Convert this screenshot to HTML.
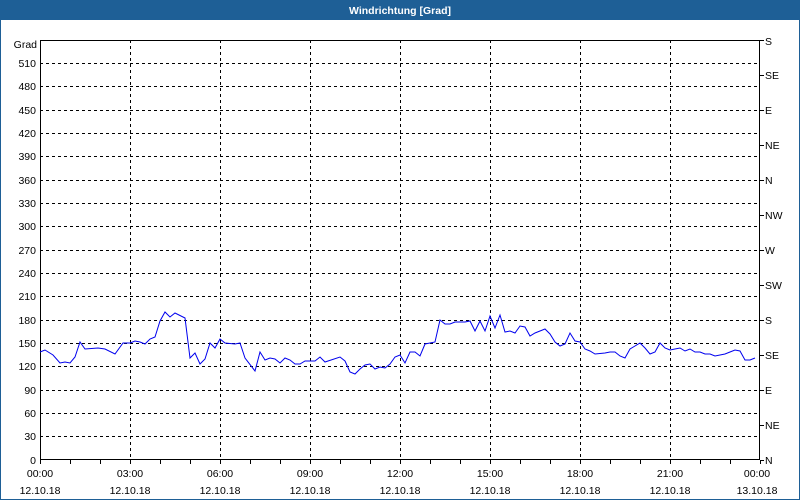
<!DOCTYPE html>
<html><head><meta charset="utf-8"><style>
html,body{margin:0;padding:0;background:#fff}
svg{display:block}
text{font-family:"Liberation Sans",sans-serif;font-size:10.5px;fill:#000}
</style></head><body>
<svg width="800" height="500" viewBox="0 0 800 500" xmlns="http://www.w3.org/2000/svg">
<rect x="0" y="0" width="800" height="500" fill="#fff"/>
<rect x="0.5" y="0.5" width="799" height="499" fill="none" stroke="#1e5f96"/>
<rect x="0" y="0" width="800" height="20" fill="#1e5f96"/>
<text x="400" y="14" text-anchor="middle" style="fill:#fff;font-weight:bold;font-size:10.5px">Windrichtung [Grad]</text>
<g stroke="#000" stroke-dasharray="3,3" stroke-width="1" shape-rendering="crispEdges">
<line x1="40" y1="63.5" x2="760" y2="63.5"/><line x1="40" y1="86.5" x2="760" y2="86.5"/><line x1="40" y1="110.5" x2="760" y2="110.5"/><line x1="40" y1="133.5" x2="760" y2="133.5"/><line x1="40" y1="156.5" x2="760" y2="156.5"/><line x1="40" y1="180.5" x2="760" y2="180.5"/><line x1="40" y1="203.5" x2="760" y2="203.5"/><line x1="40" y1="226.5" x2="760" y2="226.5"/><line x1="40" y1="250.5" x2="760" y2="250.5"/><line x1="40" y1="273.5" x2="760" y2="273.5"/><line x1="40" y1="296.5" x2="760" y2="296.5"/><line x1="40" y1="320.5" x2="760" y2="320.5"/><line x1="40" y1="343.5" x2="760" y2="343.5"/><line x1="40" y1="366.5" x2="760" y2="366.5"/><line x1="40" y1="390.5" x2="760" y2="390.5"/><line x1="40" y1="413.5" x2="760" y2="413.5"/><line x1="40" y1="436.5" x2="760" y2="436.5"/>
<line x1="130.5" y1="40" x2="130.5" y2="460"/><line x1="220.5" y1="40" x2="220.5" y2="460"/><line x1="310.5" y1="40" x2="310.5" y2="460"/><line x1="400.5" y1="40" x2="400.5" y2="460"/><line x1="490.5" y1="40" x2="490.5" y2="460"/><line x1="580.5" y1="40" x2="580.5" y2="460"/><line x1="670.5" y1="40" x2="670.5" y2="460"/>
</g>
<g stroke="#000" stroke-width="1" shape-rendering="crispEdges" fill="none">
<rect x="40.5" y="40.5" width="719" height="419"/>
<path d="M70.5 460v4M100.5 460v4M130.5 460v4M160.5 460v4M190.5 460v4M220.5 460v4M250.5 460v4M280.5 460v4M310.5 460v4M340.5 460v4M370.5 460v4M400.5 460v4M430.5 460v4M460.5 460v4M490.5 460v4M520.5 460v4M550.5 460v4M580.5 460v4M610.5 460v4M640.5 460v4M670.5 460v4M700.5 460v4M730.5 460v4M760.5 460v4M40.5 460v4"/>
<path d="M760 40.5h4M760 75.5h4M760 110.5h4M760 145.5h4M760 180.5h4M760 215.5h4M760 250.5h4M760 285.5h4M760 320.5h4M760 355.5h4M760 390.5h4M760 425.5h4M760 460.5h4"/>
</g>
<polyline fill="none" stroke="#0000ee" stroke-width="1" points="40,352 45,350 53,355 60,363 65,362 70,363 75,357 80,342 85,349 98,348 105,349 115,354 123,343 130,343 135,341 140,342 145,344 150,339 155,337 160,321 165,312 170,317 175,313 185,318 190,358 195,353 200,364 205,359 210,343 215,348 220,339 225,343 235,344 240,343 245,358 255,371 260,352 265,360 270,358 275,359 280,363 285,358 290,360 295,364 300,364 305,361 315,361 320,357 325,362 340,357 345,361 350,372 355,374 360,369 365,365 370,364 375,369 380,367 385,368 390,364 395,357 400,355 405,363 410,352 415,352 420,356 425,344 430,343 435,342 440,320 445,324 450,324 455,322 460,322 465,322 470,321 475,331 480,321 485,331 490,316 495,328 500,315 505,332 510,331 515,333 520,326 525,327 530,336 535,333 540,331 545,329 550,334 555,342 560,346 565,344 570,333 575,341 580,342 585,349 590,351 595,354 605,353 610,352 615,352 620,356 625,358 630,349 635,346 640,343 645,348 650,354 655,352 660,343 665,348 670,350 675,349 680,348 685,351 690,349 695,352 700,352 705,354 710,354 715,356 720,355 725,354 730,352 735,350 740,351 745,360 750,360 755,358"/>
<g text-anchor="end">
<text x="37" y="48">Grad</text>
<text x="36" y="67">510</text><text x="36" y="90">480</text><text x="36" y="114">450</text><text x="36" y="137">420</text><text x="36" y="160">390</text><text x="36" y="184">360</text><text x="36" y="207">330</text><text x="36" y="230">300</text><text x="36" y="254">270</text><text x="36" y="277">240</text><text x="36" y="300">210</text><text x="36" y="324">180</text><text x="36" y="347">150</text><text x="36" y="370">120</text><text x="36" y="394">90</text><text x="36" y="417">60</text><text x="36" y="440">30</text><text x="36" y="464">0</text>
</g>
<g>
<text x="765" y="45">S</text><text x="765" y="79">SE</text><text x="765" y="114">E</text><text x="765" y="149">NE</text><text x="765" y="184">N</text><text x="765" y="219">NW</text><text x="765" y="254">W</text><text x="765" y="289">SW</text><text x="765" y="324">S</text><text x="765" y="359">SE</text><text x="765" y="394">E</text><text x="765" y="429">NE</text><text x="765" y="464">N</text>
</g>
<g text-anchor="middle">
<text x="40" y="477">00:00</text><text x="130" y="477">03:00</text><text x="220" y="477">06:00</text><text x="310" y="477">09:00</text><text x="400" y="477">12:00</text><text x="490" y="477">15:00</text><text x="580" y="477">18:00</text><text x="670" y="477">21:00</text><text x="757" y="477">00:00</text>
<text x="40" y="494">12.10.18</text><text x="130" y="494">12.10.18</text><text x="220" y="494">12.10.18</text><text x="310" y="494">12.10.18</text><text x="400" y="494">12.10.18</text><text x="490" y="494">12.10.18</text><text x="580" y="494">12.10.18</text><text x="670" y="494">12.10.18</text><text x="757" y="494">13.10.18</text>
</g>
</svg>
</body></html>
